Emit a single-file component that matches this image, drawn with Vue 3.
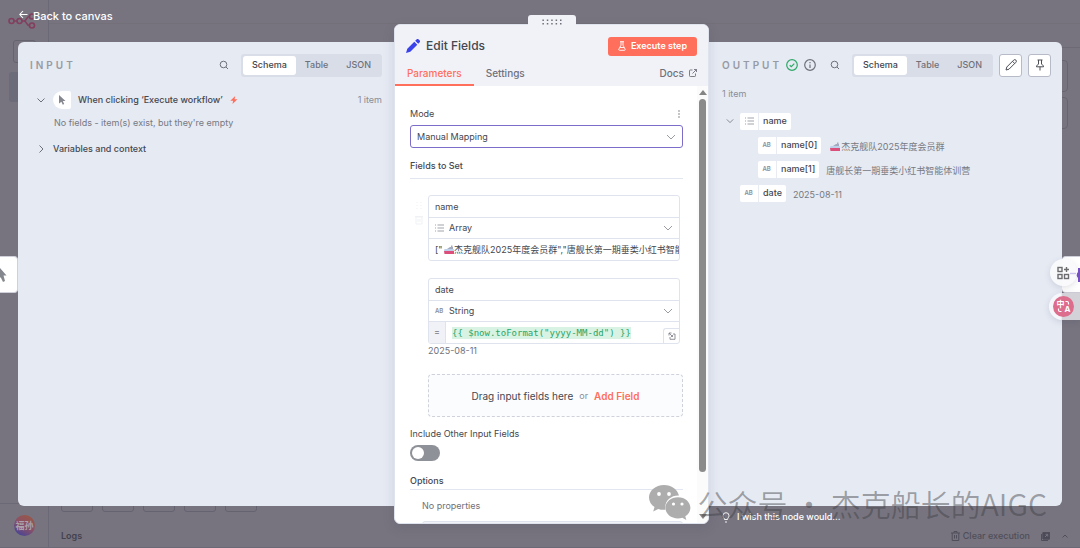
<script setup>
import { ref } from 'vue';

const views = ['Schema', 'Table', 'JSON'];
const inputView = ref('Schema');
const outputView = ref('Schema');
const activeTab = ref('Parameters');
const includeOthers = ref(false);
const mode = ref('Manual Mapping');

const fields = ref([
  { name: 'name', type: 'Array', value: '["\u2003 杰克舰队2025年度会员群","唐舰长第一期垂类小红书智能体训营"]' },
  { name: 'date', type: 'String', expression: '{{ $now.toFormat("yyyy-MM-dd") }}', result: '2025-08-11' },
]);

const outputRows = [
  { key: 'name', type: 'Array', depth: 0, open: true },
  { key: 'name[0]', type: 'String', depth: 1, ship: true, value: '杰克舰队2025年度会员群' },
  { key: 'name[1]', type: 'String', depth: 1, value: '唐舰长第一期垂类小红书智能体训营' },
  { key: 'date', type: 'String', depth: 0, value: '2025-08-11' },
];
</script>

<template>
  <div class="editor">
    <!-- dimmed canvas behind the dialog -->
    <div class="canvas" aria-hidden="true">
      <div class="canvas__sidebar">
        <svg class="canvas__logo" viewBox="0 0 28 16">
          <g fill="none" stroke="#823f5e" stroke-width="1.6">
            <circle cx="3.5" cy="8" r="2.5" /><circle cx="11.5" cy="8" r="2.5" />
            <circle cx="24" cy="3.5" r="2.5" /><circle cx="24" cy="12.5" r="2.5" />
            <path d="M6 8h3M14 8h2c3 0 2-4.500 5.500-4.500M16 8c3 0 2 4.500 5.500 4.500" />
          </g>
        </svg>
        <i class="canvas__add"></i>
        <i class="canvas__current"></i>
        <div class="canvas__user"><span class="canvas__avatar">福孙</span></div>
      </div>
      <i class="canvas__topline"></i>
      <i class="canvas__topline canvas__topline--lower"></i>
      <i class="canvas__side canvas__side--first"></i>
      <i class="canvas__side canvas__side--second"></i>
      <div class="canvas__tools"><i v-for="n in 5" :key="n"></i></div>
    </div>

    <header class="back">
      <button type="button" class="back__button">
        <svg width="9" height="9" viewBox="0 0 9 9"><path d="M8.500 4.500H1M4 1L.8 4.500 4 8" fill="none" stroke="#fff" stroke-width="1.100" /></svg>
        Back to canvas
      </button>
    </header>

    <main class="ndv">
      <section class="panel panel--input">
        <div class="panel__header">
          <h2 class="panel__title">INPUT</h2>
          <button type="button" class="icon-button search" aria-label="Search">
            <svg width="10" height="10" viewBox="0 0 10 10"><circle cx="4.500" cy="4.500" r="3.300" /><path d="M7 7l2 2" /></svg>
          </button>
          <div class="segmented">
            <button v-for="view in views" :key="view" type="button" :class="{ 'is-active': inputView === view }" @click="inputView = view">{{ view }}</button>
          </div>
        </div>
        <div class="source">
          <button type="button" class="icon-button" aria-label="Collapse">
            <svg width="10" height="10" viewBox="0 0 10 10"><path d="M1.500 3.500L5 7l3.500-3.500" /></svg>
          </button>
          <span class="source__icon">
            <svg width="8" height="10" viewBox="0 0 8 10"><path d="M1 0l6.500 6H4.800l1.400 3-1.400.7-1.400-3L1 8.500z" fill="#85878e" /></svg>
          </span>
          <span class="source__name">When clicking ‘Execute workflow’</span>
          <svg width="8" height="8" viewBox="0 0 8 8"><path d="M5.200 0L.3 4.700h2.800L2.500 8l5-4.800H4.600z" fill="#ff6f5c" /></svg>
          <span class="count">1 item</span>
        </div>
        <p class="source__empty">No fields - item(s) exist, but they're empty</p>
        <div class="source source--closed">
          <button type="button" class="icon-button" aria-label="Expand">
            <svg width="10" height="10" viewBox="0 0 10 10"><path d="M3.500 1.500L7 5 3.500 8.500" /></svg>
          </button>
          <span class="source__name">Variables and context</span>
        </div>
      </section>

      <section class="node">
        <button type="button" class="node__drag" aria-label="Drag panel">
          <svg width="22" height="6" viewBox="0 0 22 6">
            <template v-for="n in 5" :key="n">
              <rect :x="n * 4.4 - 3" y="0.500" width="1.500" height="1.500" /><rect :x="n * 4.4 - 3" y="4" width="1.500" height="1.500" />
            </template>
          </svg>
        </button>
        <div class="node__header">
          <div class="node__title">
            <svg width="14" height="14" viewBox="0 0 14 14" fill="#3a42e9"><path d="M8.300 2.700l3 3-7 7L0 14l1.300-4.300zM9.200 1.800l1.300-1.300a1.500 1.500 0 0 1 2.200 0l.8.8a1.500 1.500 0 0 1 0 2.200l-1.300 1.300z" /></svg>
            <h1>Edit Fields</h1>
            <button type="button" class="execute">
              <svg width="8" height="10" viewBox="0 0 8 10"><path d="M2 .7h4M3 .7v3.500L.8 8.300c-.2.600 0 1 .6 1h5.200c.6 0 .8-.4.600-1L5 4.200V.7M2 6.500h4" fill="none" stroke="#fff" stroke-width=".9" /></svg>
              Execute step
            </button>
          </div>
          <nav class="tabs">
            <button v-for="tab in ['Parameters', 'Settings']" :key="tab" type="button" :class="{ 'is-active': activeTab === tab }" @click="activeTab = tab">{{ tab }}</button>
            <a href="#docs">Docs
              <svg width="8" height="8" viewBox="0 0 8 8"><path d="M3.500 1H1.200Q.5 1 .5 1.700v5q0 .8.8.8h4.500q.7 0 .7-.8V4.500M5 .5h2.500V3M7.500.5L3.500 4.500" fill="none" stroke="currentColor" stroke-width=".9" /></svg>
            </a>
          </nav>
        </div>
        <div class="node__body">
          <div class="params">
            <div class="params__label">
              <label for="mode">Mode</label>
              <button type="button" class="icon-button" aria-label="Parameter options">
                <svg class="dots" width="8" height="8" viewBox="0 0 8 8"><circle cx="4" cy="1" r=".8" /><circle cx="4" cy="4" r=".8" /><circle cx="4" cy="7" r=".8" /></svg>
              </button>
            </div>
            <div class="select select--mode">
              <select id="mode" v-model="mode"><option>Manual Mapping</option><option>JSON</option></select>
              <svg width="10" height="10" viewBox="0 0 10 10"><path d="M1 3l4 4 4-4" /></svg>
            </div>
            <h3 class="params__heading">Fields to Set</h3>

            <div class="fields">
              <div v-for="(field, index) in fields" :key="index" class="field">
                <div v-if="index === 0" class="field__tools" aria-hidden="true">
                  <svg width="8" height="24" viewBox="0 0 8 24"><path d="M2 1v8M6 1v8" stroke-dasharray="1 2" /><path d="M1 16h6v7H1zM0 15.500h8M3 18v3M5 18v3" /></svg>
                </div>
                <div class="field__box">
                  <input v-model="field.name" class="field__input" aria-label="Name" />
                  <div class="select select--type">
                    <svg v-if="field.type === 'Array'" class="type-list" width="9" height="8" viewBox="0 0 9 8"><path d="M0 1h1M0 4h1M0 7h1M2.500 1H9M2.500 4H9M2.500 7H9" /></svg>
                    <span v-else class="type-ab">AB</span>
                    <select v-model="field.type" aria-label="Type"><option>Array</option><option>String</option></select>
                    <svg width="10" height="10" viewBox="0 0 10 10"><path d="M1 3l4 4 4-4" /></svg>
                  </div>
                  <div v-if="field.expression" class="expression">
                    <span class="expression__sign">=</span>
                    <code>{{ field.expression }}</code>
                    <button type="button" class="expression__open" aria-label="Open expression editor">
                      <svg width="8" height="8" viewBox="0 0 8 8"><path d="M1 3.500V1h2.500M1 1l3.500 3.500M5 2h2v5.300H2V5M4.500 3v1.500H3" fill="none" stroke="#777982" stroke-width=".8" /></svg>
                    </button>
                  </div>
                  <div v-else class="field__value">
                    <input v-model="field.value" class="field__input" aria-label="Value" />
                    <svg class="ship" width="10" height="9" viewBox="0 0 10 9"><path d="M3 4l3-2h1V.5h1.500V2H9v3H2z" fill="#a3aac0" /><path d="M.5 4h9.300V6H0z" fill="#bcd0ea" /><path d="M0 6h10v3H.5z" fill="#dc4f7c" /></svg>
                  </div>
                </div>
                <p v-if="field.result" class="field__result">{{ field.result }}</p>
              </div>
              <div class="dropzone">
                <span>Drag input fields here</span>
                <small>or</small>
                <button type="button">Add Field</button>
              </div>
            </div>

            <label class="switch">
              <span>Include Other Input Fields</span>
              <input v-model="includeOthers" type="checkbox" />
            </label>
            <h3 class="params__heading params__heading--options">Options</h3>
            <div class="options">
              <p>No properties</p>
              <button type="button" aria-label="Add option"></button>
            </div>
          </div>
          <div class="scrollbar" aria-hidden="true">
            <i class="scrollbar__up"></i>
            <i class="scrollbar__thumb"></i>
            <i class="scrollbar__down"></i>
          </div>
        </div>
      </section>

      <section class="panel panel--output">
        <div class="panel__header">
          <h2 class="panel__title">OUTPUT</h2>
          <svg class="status status--ok" width="12" height="12" viewBox="0 0 12 12"><circle cx="6" cy="6" r="5.300" /><path d="M3.700 6.200l1.600 1.500 3-3" /></svg>
          <svg class="status" width="12" height="12" viewBox="0 0 12 12"><circle cx="6" cy="6" r="5.300" /><path d="M6 5.500V9M6 3v1.200" /></svg>
          <button type="button" class="icon-button search" aria-label="Search">
            <svg width="10" height="10" viewBox="0 0 10 10"><circle cx="4.500" cy="4.500" r="3.300" /><path d="M7 7l2 2" /></svg>
          </button>
          <div class="segmented">
            <button v-for="view in views" :key="view" type="button" :class="{ 'is-active': outputView === view }" @click="outputView = view">{{ view }}</button>
          </div>
          <button type="button" class="square-button" aria-label="Edit output">
            <svg width="12" height="12" viewBox="0 0 12 12"><path d="M1 11l.8-3L8.700 1.100a1.500 1.500 0 0 1 2.200 2.200L4 10.200zM7.500 2.300l2.200 2.200" /></svg>
          </button>
          <button type="button" class="square-button" aria-label="Pin data">
            <svg width="12" height="12" viewBox="0 0 12 12"><path d="M3.500 1h5M4.500 1v4L2.500 7v.8h7V7l-2-2V1M6 7.800V11.500" /></svg>
          </button>
        </div>
        <p class="output-count">1 item</p>
        <ul class="tree">
          <li v-for="row in outputRows" :key="row.key" :class="{ 'is-nested': row.depth > 0 }">
            <button v-if="row.open" type="button" class="icon-button" aria-label="Collapse">
              <svg width="8" height="8" viewBox="0 0 10 10"><path d="M1 3l4 4 4-4" /></svg>
            </button>
            <span class="pill">
              <span class="pill__type">
                <svg v-if="row.type === 'Array'" class="type-list" width="9" height="8" viewBox="0 0 9 8"><path d="M0 1h1M0 4h1M0 7h1M2.500 1H9M2.500 4H9M2.500 7H9" /></svg>
                <span v-else class="type-ab">AB</span>
              </span>
              <span class="pill__key">{{ row.key }}</span>
            </span>
            <span v-if="row.value" class="tree__value">
              <svg v-if="row.ship" width="10" height="9" viewBox="0 0 10 9"><path d="M3 4l3-2h1V.5h1.500V2H9v3H2z" fill="#a3aac0" /><path d="M.5 4h9.300V6H0z" fill="#bcd0ea" /><path d="M0 6h10v3H.5z" fill="#dc4f7c" /></svg>{{ row.value }}
            </span>
          </li>
        </ul>
      </section>
    </main>

    <footer class="footer">
      <div class="footer__row">
        <button type="button" class="wish">
          <svg width="8" height="11" viewBox="0 0 8 11"><path d="M2.500 7.500C2.500 6 1 5.500 1 3.700a3 3 0 0 1 6 0C7 5.500 5.500 6 5.500 7.500zM3 10h2" fill="none" stroke="#fff" stroke-width=".9" /></svg>
          I wish this node would...
        </button>
      </div>
      <div class="logs">
        <span class="logs__title">Logs</span>
        <button type="button">
          <svg width="9" height="10" viewBox="0 0 9 10"><path d="M0 2h9M3 2V.5h3V2M1.200 2v7.500h6.600V2M3.500 4v3.500M5.500 4v3.500" /></svg>
          Clear execution
        </button>
        <button type="button" aria-label="Pop out">
          <svg width="9" height="9" viewBox="0 0 9 9"><path d="M2 .5h6.500V7H2zM.5 2v6.500H7" /><path d="M2 .5h6.500V7H2z" fill="#4b4955" /><path d="M4 5l2.500-2.500M4.500 2.300h2.200v2.200" stroke="#77747f" /></svg>
        </button>
        <button type="button" aria-label="Open logs">
          <svg width="8" height="8" viewBox="0 0 8 8"><path d="M1.500 5.500L4 3l2.500 2.500" /></svg>
        </button>
      </div>
    </footer>

    <button type="button" class="neighbour neighbour--previous" aria-label="Previous node">
      <svg width="8" height="18" viewBox="0 0 8 18"><path d="M0 2l6.500 7.500H3.500l1.500 5.500-2 1-2.200-4.500H0z" fill="#85878e" /></svg>
    </button>
    <button type="button" class="neighbour neighbour--next" aria-label="Next node">
      <svg width="4" height="14" viewBox="0 0 4 14"><path d="M0 7l2-3V0h2v14H2v-4z" fill="#7a52c8" /></svg>
    </button>
    <button type="button" class="bubble bubble--apps" aria-label="Apps">
      <svg width="22" height="14" viewBox="0 0 22 14" fill="none" stroke="#6c6c70" stroke-width="1.400"><rect x="1" y="1.500" width="4" height="4" /><rect x="1" y="8.500" width="4" height="4" /><rect x="7.500" y="8.500" width="4" height="4" /><path d="M7 3.500h5M9.500 1v5" /><path d="M13 7.500h6" stroke="#cfc1ee" /></svg>
    </button>
    <button type="button" class="bubble bubble--translate" aria-label="Translate">
      <span><b>中</b><b>A</b>
        <svg width="13" height="13" viewBox="0 0 13 13" fill="none" stroke="#fff" stroke-width="1.200"><path d="M8.500 1.500H10q1.500 0 1.500 1.500v1.500M1.500 8.500V10q0 1.500 1.500 1.500h1.500" /></svg>
      </span>
    </button>

    <div class="watermark">
      <svg width="42" height="36" viewBox="0 0 42 36">
        <path d="M15 0C6.500 0 0 5.600 0 12.500c0 4 2.200 7.300 5.500 9.600L4.200 26.500l5-2.600c1.800.6 3.600.9 5.800.9h1.400C15 16 22 10.200 30 10.600 28.500 4.500 22.500 0 15 0z" />
        <path d="M29 12.200c-7 0-12.600 4.700-12.600 10.600S22 33.400 29 33.400c1.500 0 3-.2 4.300-.7l4 2.200-1-3.600c3.100-2 5.100-5 5.100-8.500 0-5.900-5.400-10.600-12.400-10.600z" />
        <g fill="#fff"><circle cx="10" cy="9" r="1.900" /><circle cx="20" cy="9" r="1.900" /><circle cx="24.500" cy="19" r="1.600" /><circle cx="33" cy="19" r="1.600" /></g>
      </svg>
      <span>公众号 · 杰克船长的AIGC</span>
    </div>
  </div>
</template>

<style>
body {
  margin: 0;
}
</style>

<style scoped>
* {
  box-sizing: border-box;
}

.editor {
  position: relative;
  display: flex;
  flex-direction: column;
  height: 100vh;
  overflow: hidden;
  background: #77747f;
  color: #45474f;
  font-family: Inter, "Noto Sans CJK SC", sans-serif;
  font-size: 9px;
  line-height: 14px;
}

h1,
h2,
h3,
p,
ul {
  margin: 0;
  padding: 0;
}

button,
input,
select {
  margin: 0;
  padding: 0;
  border: 0;
  background: none;
  color: inherit;
  font: inherit;
  outline: none;
  appearance: none;
}

svg {
  flex: none;
}

/* canvas */
.canvas {
  position: absolute;
  inset: 0;
}

.canvas__sidebar {
  position: absolute;
  inset: 0 auto 0 0;
  width: 49px;
  border-right: 1px solid #6b6976;
}

.canvas__logo {
  position: absolute;
  left: 8px;
  top: 13px;
  width: 28px;
  height: 16px;
}

.canvas__add,
.canvas__current {
  position: absolute;
  left: 13px;
  top: 40px;
  width: 23px;
  height: 23px;
  border: 1px solid #656370;
  border-radius: 3px;
}

.canvas__current {
  left: 9px;
  top: 72px;
  width: 30px;
  height: 30px;
  border: 0;
  background: #6b6b79;
}

.canvas__user {
  position: absolute;
  inset: auto 0 0 0;
  height: 45px;
  padding: 11px 0 0 14px;
  border-top: 1px solid #6b6976;
}

.canvas__avatar {
  display: flex;
  align-items: center;
  justify-content: center;
  width: 21px;
  height: 21px;
  border-radius: 50%;
  background: linear-gradient(30deg, #4f4691 15%, #8a5068 50%, #95564f 80%);
  color: #aaa3ab;
  font-weight: 700;
}

.canvas__topline {
  position: absolute;
  inset: 23px 0 auto 49px;
  height: 1px;
  background: #737079;
}

.canvas__topline--lower {
  top: 47px;
  background: #6d6a76;
}

.canvas__side {
  position: absolute;
  right: 12px;
  top: 60px;
  width: 32px;
  height: 32px;
  border: 1px solid #676570;
  border-radius: 4px;
}

.canvas__side--second {
  top: 97px;
}

.canvas__tools {
  position: absolute;
  left: 61px;
  bottom: 36px;
  display: flex;
  gap: 9px;
}

.canvas__tools i {
  width: 32px;
  height: 32px;
  border: 1px solid #656370;
  border-radius: 3px;
}

/* dialog */
.back {
  position: relative;
  flex: none;
  height: 42px;
  padding: 9px 19px;
}

.back__button {
  display: flex;
  align-items: center;
  gap: 5px;
  color: #fff;
  font-size: 11px;
  font-weight: 500;
}

.back__button svg {
  margin-bottom: 4px;
}

.ndv {
  position: relative;
  display: grid;
  grid-template-rows: minmax(0, 1fr);
  grid-template-columns: minmax(0, 376fr) 315px minmax(0, 353fr);
  flex: 1;
  min-height: 0;
  padding: 0 18px;
}

.panel {
  min-width: 0;
  background: #e5eaf3;
}

.panel--input {
  padding: 12px;
  border-radius: 6px 0 0 6px;
}

.panel--output {
  padding: 12px 11px 12px 13px;
  border-radius: 0 6px 6px 0;
}

.panel__header {
  display: flex;
  align-items: center;
  height: 22px;
}

.panel__title {
  margin-right: 4px;
  color: #989aa3;
  font-size: 10px;
  font-weight: 600;
  letter-spacing: 3px;
}

.icon-button {
  display: flex;
  align-items: center;
  justify-content: center;
}

.icon-button svg {
  fill: none;
  stroke: #6f717a;
  stroke-width: 1;
}

.icon-button .dots {
  fill: #7c7e87;
  stroke: none;
}

.search {
  margin: 0 12px 0 auto;
}

.segmented {
  display: flex;
  height: 23px;
  padding: 2px;
  border-radius: 3px;
  background: #d9dde8;
}

.segmented button {
  padding: 0 9px;
  border-radius: 3px;
  color: #6f717a;
  font-weight: 500;
}

.segmented .is-active {
  background: #fff;
  color: #43454d;
}

.source {
  display: flex;
  align-items: center;
  gap: 7px;
  height: 18px;
  margin-top: 15px;
  padding-left: 6px;
}

.source__icon {
  display: flex;
  align-items: center;
  justify-content: center;
  width: 18px;
  height: 18px;
  border-radius: 9px 2px 2px 9px;
  background: #fff;
}

.source--closed {
  margin-top: 10px;
}

.source__name {
  font-weight: 500;
}

.source__empty {
  margin-top: 7px;
  padding-left: 24px;
  color: #777982;
}

.count {
  margin-left: auto;
  color: #8b8d96;
}

.status {
  margin-right: 6px;
  fill: none;
  stroke: #6f717a;
  stroke-width: 1.2px;
}

.status--ok {
  stroke: #2fa868;
}

.square-button {
  display: flex;
  flex: none;
  align-items: center;
  justify-content: center;
  width: 23px;
  height: 23px;
  margin-left: 6px;
  border: 1px solid #b7bac7;
  border-radius: 3px;
  background: #fff;
}

.square-button svg {
  fill: none;
  stroke: #4c4e56;
}

.output-count {
  margin-top: 11px;
  color: #8b8d96;
}

.tree {
  margin-top: 8px;
  list-style: none;
}

.tree li {
  position: relative;
  display: flex;
  align-items: center;
  gap: 7px;
  height: 24px;
  padding-left: 18px;
}

.tree .is-nested {
  padding-left: 36px;
}

.tree .icon-button {
  position: absolute;
  left: 4px;
}

.tree__value {
  display: flex;
  align-items: center;
  gap: 1px;
  padding-top: 3px;
  color: #777982;
}

.is-nested .tree__value svg {
  margin-left: 2px;
}

.pill {
  display: flex;
  align-items: center;
  height: 17px;
  border-radius: 2px;
  background: #fff;
}

.pill__type {
  display: flex;
  align-items: center;
  justify-content: center;
  width: 19px;
  height: 17px;
  border-right: 1px solid #e8ebf2;
}

.pill__key {
  padding: 0 4px;
  font-weight: 500;
}

.type-list {
  stroke: #a1a3aa;
  stroke-width: 1;
}

.type-ab {
  width: 9px;
  color: #8b8d94;
  font-size: 6px;
  font-weight: 600;
}

/* node settings */
.node {
  position: relative;
  display: flex;
  flex-direction: column;
  margin: -18px 0;
  border: 1px solid #dfe3ee;
  border-radius: 6px;
  background: #fff;
  box-shadow: 0 4px 12px rgba(60, 60, 90, 0.15);
}

.node__drag {
  position: absolute;
  left: 50%;
  top: -10px;
  display: flex;
  align-items: center;
  justify-content: center;
  width: 48px;
  height: 14px;
  margin-left: -24px;
  border-radius: 3px 3px 0 0;
  background: #f1f2f8;
}

.node__drag svg {
  fill: #6f717a;
}

.node__header {
  flex: none;
  padding: 12px 11px 0;
  border-radius: 5px 5px 0 0;
  background: #f1f2f8;
}

.node__title {
  display: flex;
  align-items: center;
  gap: 6px;
  height: 18px;
}

.node__title h1 {
  font-size: 12px;
  font-weight: 500;
}

.execute {
  display: flex;
  align-items: center;
  gap: 5px;
  height: 19px;
  margin-left: auto;
  padding: 0 10px;
  border-radius: 3px;
  background: #ff6f5c;
  color: #fff;
  font-weight: 600;
}

.tabs {
  display: flex;
  align-items: center;
  height: 31px;
  margin-left: -11px;
  color: #6f717a;
  font-size: 10px;
  font-weight: 500;
}

.tabs button {
  height: 31px;
  padding: 6px 12px 0;
  border-bottom: 2px solid transparent;
}

.tabs .is-active {
  border-color: #ff6f5c;
  color: #ff6f5c;
}

.tabs a {
  display: flex;
  align-items: center;
  gap: 5px;
  margin-left: auto;
  padding-top: 5px;
  color: inherit;
  text-decoration: none;
}

.node__body {
  display: flex;
  flex: 1;
  min-height: 0;
  overflow: hidden;
  border-radius: 0 0 6px 6px;
}

.params {
  flex: 1;
  min-width: 0;
  padding: 20px 14px 0 15px;
}

.params__label {
  display: flex;
  justify-content: space-between;
  align-items: center;
  height: 15px;
}

.params__heading {
  margin-top: 11px;
  padding-bottom: 5px;
  border-bottom: 1px solid #e2e6f0;
  font-size: 9px;
  font-weight: 500;
}

.select {
  display: flex;
  align-items: center;
  height: 22px;
  padding: 0 6px;
}

.select select {
  flex: 1;
  min-width: 0;
}

.select > svg:last-child {
  fill: none;
  stroke: #9a9ca4;
}

.select--mode {
  height: 23px;
  margin-top: 4px;
  border: 1px solid #7d6dca;
  border-radius: 3px;
}

.fields {
  display: flex;
  flex-direction: column;
  gap: 17px;
  margin-top: 16px;
  padding-left: 18px;
}

.field {
  position: relative;
  margin-right: 3px;
}

.field__tools {
  position: absolute;
  left: -13px;
  top: 6px;
}

.field__tools svg {
  fill: none;
  stroke: #f0f1f4;
}

.field__box {
  border: 1px solid #dfe3ee;
  border-radius: 3px;
  overflow: hidden;
}

.field__input {
  display: block;
  width: 100%;
  height: 21px;
  padding-left: 6px;
}

.field__value {
  position: relative;
}

.ship {
  position: absolute;
  left: 15px;
  top: 6px;
}

.select--type {
  gap: 5px;
  border: 1px solid #dfe3ee;
  border-width: 1px 0;
}

.field__result {
  height: 13px;
  color: #6f717a;
  line-height: 13px;
}

.expression {
  display: flex;
  height: 21px;
}

.expression__sign {
  width: 17px;
  border-right: 1px solid #dfe3ee;
  background: #f1f2f8;
  color: #777982;
  line-height: 19px;
  text-align: center;
}

.expression code {
  align-self: center;
  margin-left: 6px;
  background: #d8f3e4;
  color: #2aa566;
  font-family: "DejaVu Sans Mono", monospace;
  font-size: 9px;
  line-height: 12px;
}

.expression__open {
  display: flex;
  align-items: center;
  justify-content: center;
  align-self: flex-end;
  width: 16px;
  height: 15px;
  margin-left: auto;
  border: 1px solid #dfe3ee;
  border-width: 1px 0 0 1px;
  border-radius: 3px 0 0 0;
}

.dropzone {
  display: flex;
  align-items: center;
  justify-content: center;
  gap: 6px;
  height: 43px;
  border: 1px dashed #cfd2da;
  border-radius: 4px;
  background: #fbfcfe;
  font-size: 10px;
}

.dropzone small {
  color: #8b8d96;
  font-size: 9px;
}

.dropzone button {
  color: #ff6f5c;
  font-weight: 600;
}

.switch {
  display: flex;
  flex-direction: column;
  align-items: flex-start;
  gap: 4px;
  margin-top: 10px;
}

.switch input {
  display: flex;
  width: 30px;
  height: 16px;
  padding: 2px;
  border-radius: 8px;
  background: #8f9198;
}

.switch input::before {
  width: 12px;
  height: 12px;
  border-radius: 50%;
  background: #fff;
  content: "";
}

.switch input:checked {
  justify-content: flex-end;
}

.params__heading--options {
  margin-top: 13px;
  padding-bottom: 1px;
}

.options {
  padding: 9px 0 0 12px;
  color: #6f717a;
}

.options button {
  display: block;
  width: 100%;
  height: 22px;
  margin-top: 8px;
  border: 1px solid #dfe3ee;
  border-radius: 3px;
  background: #f1f2f8;
}

.scrollbar {
  display: flex;
  flex: none;
  flex-direction: column;
  align-items: center;
  width: 11px;
  padding: 4px 0;
  background: #fbfbfb;
}

.scrollbar__up {
  border: 4px solid transparent;
  border-top: 0;
  border-bottom: 5px solid #858585;
}

.scrollbar__thumb {
  width: 7px;
  height: 87%;
  margin-top: 4px;
  border-radius: 4px;
  background: #8b8b8b;
}

.scrollbar__down {
  margin-top: auto;
  border: 4px solid transparent;
  border-top: 5px solid #858585;
  border-bottom: 0;
}

/* footer */
.footer {
  display: flex;
  flex: none;
  flex-direction: column;
  justify-content: space-between;
  height: 42px;
  padding-top: 4px;
}

.footer__row {
  position: relative;
  display: grid;
  grid-template-columns: minmax(0, 376fr) 315px minmax(0, 353fr);
  padding: 0 18px;
}

.wish {
  display: flex;
  grid-column: 3;
  align-items: center;
  gap: 7px;
  padding-left: 13px;
  color: #fff;
  font-weight: 500;
}

.logs {
  position: relative;
  display: flex;
  align-items: center;
  gap: 11px;
  height: 23px;
  padding: 0 11px 0 61px;
  border-bottom: 1px solid #6b6976;
  color: #504e5a;
  font-weight: 500;
}

.logs__title {
  margin-right: auto;
  color: #44424e;
  font-weight: 600;
}

.logs button {
  display: flex;
  align-items: center;
  gap: 3px;
}

.logs svg {
  fill: none;
  stroke: #504e5a;
}

/* floating items */
.neighbour {
  position: absolute;
  left: 0;
  top: 256px;
  display: flex;
  align-items: center;
  width: 18px;
  height: 37px;
  border: 1px solid #cfd0da;
  border-left: 0;
  border-radius: 0 4px 4px 0;
  background: #fff;
}

.neighbour--next {
  right: 0;
  left: auto;
  justify-content: flex-end;
  border-width: 1px 0 1px 1px;
  border-radius: 4px 0 0 4px;
}

.bubble {
  position: absolute;
  right: 3px;
  top: 259px;
  display: flex;
  align-items: center;
  width: 27px;
  height: 27px;
  padding-left: 7px;
  border-radius: 50%;
  background: rgba(250, 250, 252, 0.92);
  box-shadow: 0 2px 6px rgba(60, 60, 90, 0.15);
}

.bubble--translate {
  right: 0;
  top: 293px;
  width: 31px;
  padding-left: 4px;
  border-radius: 14px 0 0 14px;
  background: linear-gradient(90deg, #f6f7fb 40%, #d3d2d8 41%);
}

.bubble--translate span {
  position: relative;
  display: flex;
  align-items: center;
  justify-content: center;
  width: 21px;
  height: 21px;
  border-radius: 50%;
  background: #dd6d8d;
  color: #fff;
  font-size: 8px;
  line-height: 8px;
}

.bubble--translate svg {
  position: absolute;
  inset: 4px;
}

.bubble--translate b:first-child {
  margin-bottom: 5px;
}

.bubble--translate b:nth-child(2) {
  margin-top: 5px;
}

.watermark {
  position: absolute;
  right: 33px;
  bottom: 25px;
  display: flex;
  align-items: center;
  gap: 6px;
  color: rgba(60, 60, 64, 0.45);
  font-family: "Noto Sans CJK SC", sans-serif;
  font-size: 30px;
  font-weight: 350;
  line-height: 40px;
  white-space: nowrap;
  pointer-events: none;
}

.watermark svg {
  fill: #adadad;
}
</style>
